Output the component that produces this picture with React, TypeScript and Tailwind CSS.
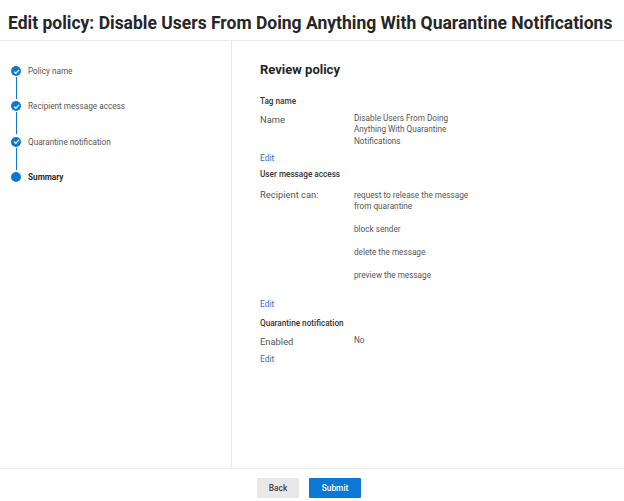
const font = { fontFamily: 'Roboto, "Open Sans", sans-serif' };

function Check() {
  return (
    <span className="flex h-[10px] w-[10px] items-center justify-center rounded-full bg-[#0a78d4]">
      <svg width="7" height="7" viewBox="0 0 10 10" fill="none" stroke="white" strokeWidth="1.8">
        <path d="M1.5 5.2 L4 7.6 L8.6 2.6" />
      </svg>
    </span>
  );
}

function Step({ label, done, last }: { label: string; done?: boolean; last?: boolean }) {
  return (
    <div className="flex h-[35.4px] gap-[7px]">
      <div className="flex w-[10px] flex-col items-center">
        {done ? <Check /> : <span className="h-[10px] w-[10px] rounded-full bg-[#0a78d4]" />}
        {!last && <span className="mt-[1px] h-[22px] w-[1px] bg-[#0a78d4]" />}
      </div>
      <span className={`-mt-[1px] h-[12px] text-[8.2px] leading-[12px] ${last ? "font-bold text-[#2b2b2b]" : "text-[#555]"}`}>
        {label}
      </span>
    </div>
  );
}

function Row({ label, labelClass, children }: { label: string; labelClass: string; children: React.ReactNode }) {
  return (
    <div className="flex">
      <div className={`w-[94px] text-[9.4px] leading-[14px] text-[#555] ${labelClass}`}>{label}</div>
      <div className="w-[125px] pt-[1px] text-[8.2px] leading-[11.3px] text-[#555]">{children}</div>
    </div>
  );
}

function Heading({ children, className }: { children: React.ReactNode; className: string }) {
  return <div className={`text-[8.2px] font-medium leading-[12px] text-[#333] ${className}`}>{children}</div>;
}

function Edit({ className }: { className: string }) {
  return <div className={`text-[8.4px] leading-[12px] text-[#1b74bd] ${className}`}>Edit</div>;
}

export default function App() {
  return (
    <div style={font} className="flex h-[501px] w-[624px] flex-col overflow-hidden bg-white">
      <header className="flex h-[41px] shrink-0 items-start border-b border-[#e9e9e9] pl-[8px] pt-[11px]">
        <h1 className="whitespace-nowrap text-[17.5px] font-bold leading-[25px] text-[#262626]">
          Edit policy: Disable Users From Doing Anything With Quarantine Notifications
        </h1>
      </header>
      <div className="flex min-h-0 flex-1">
        <aside className="w-[232px] shrink-0 border-r border-[#e9e9e9] pl-[11px] pt-[25px]">
          <Step label="Policy name" done />
          <Step label="Recipient message access" done />
          <Step label="Quarantine notification" done />
          <Step label="Summary" last />
        </aside>
        <main className="flex-1 pl-[28px] pt-[20px]">
          <h2 className="text-[13px] font-bold leading-[17px] text-[#262626]">Review policy</h2>
          <Heading className="mt-[17px]">Tag name</Heading>
          <div className="mt-[5px]">
            <Row label="Name" labelClass="pt-[1px]">
              Disable Users From Doing
              <br />
              Anything With Quarantine
              <br />
              Notifications
            </Row>
          </div>
          <Edit className="mt-[5px]" />
          <Heading className="mt-[4px]">User message access</Heading>
          <div className="mt-[9px]">
            <Row label="Recipient can:" labelClass="-mt-[1px]">
              <p>
                request to release the message
                <br />
                from quarantine
              </p>
              <p className="mt-[11.7px]">block sender</p>
              <p className="mt-[11.7px]">delete the message</p>
              <p className="mt-[11.7px]">preview the message</p>
            </Row>
          </div>
          <Edit className="mt-[17px]" />
          <Heading className="mt-[7px]">Quarantine notification</Heading>
          <div className="mt-[5px]">
            <Row label="Enabled" labelClass="pt-[1px]">No</Row>
          </div>
          <Edit className="mt-[4px]" />
        </main>
      </div>
      <footer className="flex h-[33px] shrink-0 justify-center gap-[10px] border-t border-[#e9e9e9] pr-[6px] pt-[9px]">
        <button className="h-[20px] w-[42px] rounded-[1px] bg-[#e8e8e8] text-[8.4px] font-medium text-[#444]">Back</button>
        <button className="h-[20px] w-[52px] rounded-[1px] bg-[#0a78d4] text-[8.4px] font-medium text-white">Submit</button>
      </footer>
    </div>
  );
}
